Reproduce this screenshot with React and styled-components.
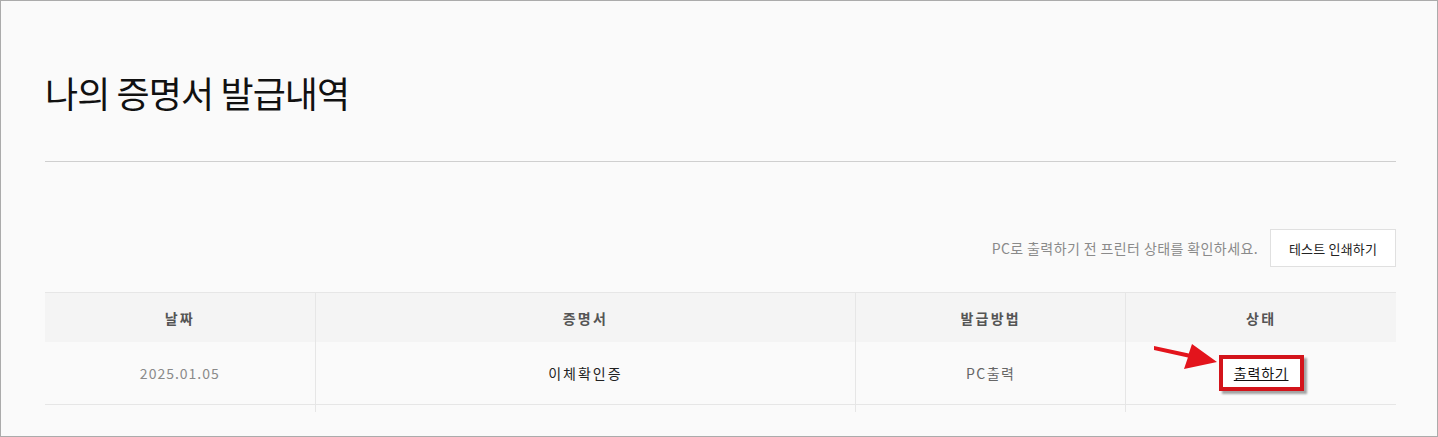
import React from 'react';
import styled, { createGlobalStyle } from 'styled-components';

const GlobalStyle = createGlobalStyle`
  html, body {
    margin: 0;
    padding: 0;
    background: #fafafa;
  }
  body {
    font-family: 'Noto Sans CJK KR', 'Noto Sans', sans-serif;
  }
`;

const Frame = styled.div`
  box-sizing: border-box;
  width: 1438px;
  height: 437px;
  border: 1px solid #ababab;
  background: #fafafa;
  padding: 0 41px 0 44px;
  overflow: hidden;
`;

const Title = styled.h1`
  margin: 0;
  padding: 69px 0 47px;
  font-size: 36px;
  font-weight: 400;
  line-height: 44px;
  color: #111;
  letter-spacing: -0.9px;
`;

const Divider = styled.hr`
  margin: 0;
  border: none;
  border-top: 1px solid #cfcfcf;
`;

const Toolbar = styled.div`
  display: flex;
  justify-content: flex-end;
  align-items: center;
  gap: 12px;
  margin-top: 67px;
`;

const Note = styled.span`
  font-size: 14px;
  color: #8a8a8a;
  letter-spacing: 0.4px;
`;

const TestButton = styled.button`
  box-sizing: border-box;
  width: 126px;
  height: 38px;
  background: #fff;
  border: 1px solid #e0e0e0;
  font-family: inherit;
  font-size: 13px;
  color: #222;
  letter-spacing: 0.2px;
  cursor: pointer;
`;

const Table = styled.table`
  width: 100%;
  margin-top: 25px;
  border-collapse: collapse;
  table-layout: fixed;
  border-top: 1px solid #e6e6e6;
`;

const HeadCell = styled.th`
  height: 49px;
  padding: 0;
  background: #f4f4f4;
  font-size: 14px;
  font-weight: 700;
  color: #555;
  letter-spacing: 2.2px;
  border-left: ${(p) => (p.$first ? 'none' : '1px solid #e6e6e6')};
`;

const Cell = styled.td`
  height: 62px;
  padding: 0;
  text-align: center;
  font-size: 14px;
  color: ${(p) => p.$color || '#222'};
  letter-spacing: ${(p) => p.$spacing || '1px'};
  border-bottom: 1px solid #e6e6e6;
  border-left: ${(p) => (p.$first ? 'none' : '1px solid #e6e6e6')};
`;

const Tail = styled.td`
  height: 7px;
  padding: 0;
  border-left: ${(p) => (p.$first ? 'none' : '1px solid #e6e6e6')};
`;

const Marked = styled.span`
  position: relative;
  display: inline-block;
  padding: 4px 11px 4px;
  border: 4px solid #d3141b;
  background: #fff;
  box-shadow: 3px 3px 2px rgba(0, 0, 0, 0.35);
  letter-spacing: 0;
`;

const PrintLink = styled.a`
  font-size: 14px;
  color: #111;
  text-decoration: underline;
  letter-spacing: 0.8px;
  cursor: pointer;
`;

const Arrow = styled.svg`
  position: absolute;
  left: -72px;
  top: -18px;
  width: 70px;
  height: 32px;
  overflow: visible;
`;

const columns = [
  { label: '날짜', width: '20%' },
  { label: '증명서', width: '40%' },
  { label: '발급방법', width: '20%' },
  { label: '상태', width: '20%' },
];

export default function App() {
  return (
    <>
      <GlobalStyle />
      <Frame>
        <Title>나의 증명서 발급내역</Title>
        <Divider />
        <Toolbar>
          <Note>PC로 출력하기 전 프린터 상태를 확인하세요.</Note>
          <TestButton>테스트 인쇄하기</TestButton>
        </Toolbar>
        <Table>
          <colgroup>
            {columns.map((c) => (
              <col key={c.label} style={{ width: c.width }} />
            ))}
          </colgroup>
          <thead>
            <tr>
              {columns.map((c, i) => (
                <HeadCell key={c.label} $first={i === 0}>
                  {c.label}
                </HeadCell>
              ))}
            </tr>
          </thead>
          <tbody>
            <tr>
              <Cell $first $color="#8a8a8a" $spacing="1px">2025.01.05</Cell>
              <Cell $spacing="2px">이체확인증</Cell>
              <Cell $color="#666" $spacing="1.5px">PC출력</Cell>
              <Cell>
                <Marked>
                  <Arrow viewBox="0 0 70 32">
                    <polygon
                      points="3,5 37.8,12.5 41,3 66,21 33,28 36.9,16.4 3,9"
                      fill="#e3141c"
                    />
                  </Arrow>
                  <PrintLink>출력하기</PrintLink>
                </Marked>
              </Cell>
            </tr>
            <tr>
              <Tail $first />
              <Tail />
              <Tail />
              <Tail />
            </tr>
          </tbody>
        </Table>
      </Frame>
    </>
  );
}
